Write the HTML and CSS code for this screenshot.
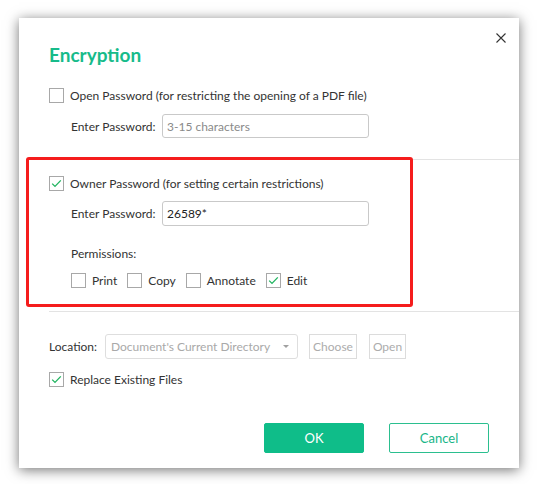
FILE: index.html
```html
<!DOCTYPE html>
<html>
<head>
<meta charset="utf-8">
<link rel="stylesheet" href="styles.css">
</head>
<body>
<div class="dialog">
  <button class="close" aria-label="Close">
    <svg width="10" height="10" viewBox="0 0 10 10"><path d="M0.5 0.5 L9.5 9.5 M9.5 0.5 L0.5 9.5" stroke="#333" stroke-width="1.1" fill="none"/></svg>
  </button>
  <div class="title">Encryption</div>

  <label class="cb-row r1">
    <span class="box"></span>
    <span>Open Password (for restricting the opening of a PDF file)</span>
  </label>
  <div class="field-row f1">
    <span class="field-label">Enter Password:</span>
    <div class="input placeholder">3-15 characters</div>
  </div>

  <div class="divider d1"></div>

  <label class="cb-row r2">
    <span class="box checked"><svg width="11" height="9" viewBox="0 0 11 9"><path d="M1.2 4.6 L4 7.4 L9.8 1.4" stroke="#1fb45f" stroke-width="1.3" fill="none"/></svg></span>
    <span>Owner Password (for setting certain restrictions)</span>
  </label>
  <div class="field-row f2">
    <span class="field-label">Enter Password:</span>
    <div class="input value">26589*</div>
  </div>
  <div class="perm-label">Permissions:</div>
  <div class="perms">
    <label class="perm"><span class="box"></span><span>Print</span></label>
    <label class="perm"><span class="box"></span><span>Copy</span></label>
    <label class="perm"><span class="box"></span><span>Annotate</span></label>
    <label class="perm"><span class="box checked"><svg width="11" height="9" viewBox="0 0 11 9"><path d="M1.2 4.6 L4 7.4 L9.8 1.4" stroke="#1fb45f" stroke-width="1.3" fill="none"/></svg></span><span>Edit</span></label>
  </div>

  <div class="divider d2"></div>

  <div class="loc-row">
    <span class="loc-label">Location:</span>
    <div class="select"><span>Document's Current Directory</span><span class="caret"></span></div>
    <div class="btn-dis choose">Choose</div>
    <div class="btn-dis open">Open</div>
  </div>

  <label class="cb-row r3">
    <span class="box checked"><svg width="11" height="9" viewBox="0 0 11 9"><path d="M1.2 4.6 L4 7.4 L9.8 1.4" stroke="#1fb45f" stroke-width="1.3" fill="none"/></svg></span>
    <span>Replace Existing Files</span>
  </label>

  <div class="actions">
    <button class="btn ok">OK</button>
    <button class="btn cancel">Cancel</button>
  </div>

  <div class="highlight"></div>
</div>
</body>
</html>
```
FILE: styles.css
```css
html, body {
  margin: 0;
  padding: 0;
  background: #ffffff;
}
body {
  font-family: "Lato", "Noto Sans", sans-serif;
  font-size: 12px;
  color: #333;
  padding: 18px 0 0 19px;
  height: 484px;
  box-sizing: border-box;
  overflow: hidden;
}
.dialog {
  position: relative;
  width: 500px;
  height: 450px;
  background: #fff;
  box-sizing: border-box;
  padding-left: 30px;
  box-shadow: 0 2px 12px rgba(0,0,0,0.55);
}
.close {
  position: absolute;
  top: 14px;
  left: 476px;
  width: 12px;
  height: 12px;
  padding: 0;
  border: 0;
  background: none;
  display: flex;
  align-items: center;
  justify-content: center;
}
.title {
  padding-top: 26px;
  height: 22px;
  line-height: 22px;
  font-size: 19px;
  font-weight: 700;
  color: #17bb8a;
}
.cb-row {
  display: flex;
  align-items: center;
  gap: 6px;
  height: 15px;
}
.r1 { margin-top: 22px; }
.r2 { margin-top: 16px; }
.r3 { margin-top: 13px; }
.box {
  width: 15px;
  height: 15px;
  box-sizing: border-box;
  border: 1px solid #a8a8a8;
  background: #fff;
  display: flex;
  align-items: center;
  justify-content: center;
  flex: none;
}
.field-row {
  display: flex;
  align-items: center;
  padding-left: 22px;
}
.f1 { margin-top: 11px; height: 24px; }
.f2 { margin-top: 10px; height: 25px; }
.field-label {
  width: 91px;
  flex: none;
}
.input {
  width: 207px;
  height: 100%;
  box-sizing: border-box;
  border: 1px solid #c9c9c9;
  border-radius: 3px;
  display: flex;
  align-items: center;
  padding-left: 4px;
}
.placeholder { color: #8a8a8a; }
.value { color: #222; }
.divider {
  height: 1px;
  background: #e3e3e3;
}
.d1 { margin-top: 21px; }
.d2 { margin-top: 23px; }
.perm-label {
  margin-top: 20px;
  padding-left: 22px;
  height: 16px;
  line-height: 16px;
}
.perms {
  margin-top: 11px;
  padding-left: 22px;
  display: flex;
  gap: 10px;
  height: 15px;
}
.perm {
  display: flex;
  align-items: center;
  gap: 6px;
}
.loc-row {
  margin-top: 22px;
  height: 25px;
  display: flex;
  align-items: stretch;
}
.loc-label {
  width: 56px;
  flex: none;
  display: flex;
  align-items: center;
}
.select {
  width: 193px;
  box-sizing: border-box;
  border: 1px solid #dedede;
  border-radius: 3px;
  color: #a9a9a9;
  display: flex;
  align-items: center;
  justify-content: space-between;
  padding: 0 8px 0 5px;
}
.caret {
  width: 0;
  height: 0;
  border-left: 3px solid transparent;
  border-right: 3px solid transparent;
  border-top: 3px solid #a0a0a0;
}
.btn-dis {
  margin-left: 11px;
  box-sizing: border-box;
  border: 1px solid #dcdcdc;
  color: #acacac;
  display: flex;
  align-items: center;
  justify-content: center;
}
.choose { width: 48px; }
.open { width: 37px; margin-left: 12px; }
.actions {
  margin-top: 36px;
  padding-right: 30px;
  display: flex;
  justify-content: flex-end;
  gap: 25px;
}
.btn {
  width: 100px;
  height: 30px;
  box-sizing: border-box;
  border-radius: 2px;
  font-family: inherit;
  font-size: 13px;
  padding: 0;
}
.ok {
  background: #0fbd89;
  border: 1px solid #0fbd89;
  color: #fff;
}
.cancel {
  background: #fff;
  border: 1px solid #2bbf8f;
  color: #17b587;
}
.highlight {
  position: absolute;
  left: 7px;
  top: 139px;
  width: 387px;
  height: 150px;
  box-sizing: border-box;
  border: 3px solid #f51c1c;
  border-radius: 3px;
  pointer-events: none;
}
```
